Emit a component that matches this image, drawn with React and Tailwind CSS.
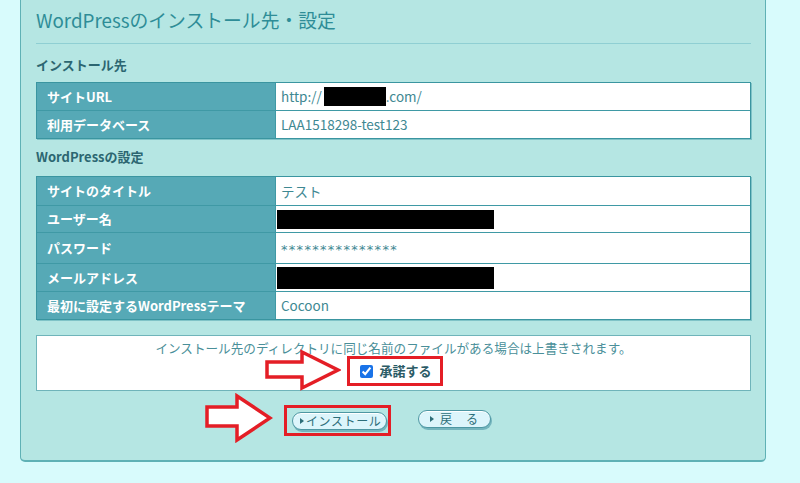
import React from "react";

const font = { fontFamily: '"Noto Sans CJK JP", "Noto Sans", sans-serif' };

function Row({ label, children, h, last }) {
  return (
    <div className={`flex ${last ? "" : "border-b border-[#3f99a5]"}`} style={{ height: h }}>
      <div className="w-[239px] shrink-0 bg-[#56a9b6] border-r border-[#3f99a5] pl-[10px] flex items-center text-[13px] font-bold text-white">
        {label}
      </div>
      <div className="flex-1 bg-white pl-[5px] flex items-center text-[13.5px] text-[#3e8892]">{children}</div>
    </div>
  );
}

function Table({ children }) {
  return (
    <div className="w-[715px] border border-[#3a95a0] shadow-[1px_1px_0_#7fc3c7]">{children}</div>
  );
}

function Redact({ w, h, ml = 0 }) {
  return <span className="inline-block bg-black" style={{ width: w, height: h, marginLeft: ml }} />;
}

function Tri() {
  return <span className="inline-block w-0 h-0 border-y-[3px] border-y-transparent border-l-[4px] border-l-[#2d6e79]" />;
}

export default function App() {
  return (
    <div className="min-h-[483px] bg-[#d8fbfc] pl-[20px]" style={font}>
      <div className="w-[746px] bg-[#b5e6e3] border-x border-b-2 border-[#5fb1b5] rounded-b-[5px] pl-[15px] pr-[14px] pb-[24px]">
        <div className="pt-[5px] pb-[8px] leading-[30px] text-[18.8px] text-[#2e8d97] border-b border-[#8fcfd3]">
          WordPressのインストール先・設定
        </div>
        <div className="pt-[12px] pb-[8px] leading-[18px] text-[13px] font-bold text-[#2c6671]">インストール先</div>
        <Table>
          <Row label="サイトURL" h={28}>
            <span>http://</span>
            <Redact w={62} h={19} ml={2} />
            <span>.com/</span>
          </Row>
          <Row label="利用データベース" h={27} last>
            LAA1518298-test123
          </Row>
        </Table>
        <div className="pt-[9px] pb-[10px] leading-[18px] text-[13px] font-bold text-[#2c6671]">WordPressの設定</div>
        <Table>
          <Row label="サイトのタイトル" h={29}>
            テスト
          </Row>
          <Row label="ユーザー名" h={27}>
            <Redact w={217} h={19} ml={-4} />
          </Row>
          <Row label="パスワード" h={31}>
            <span className="tracking-[1.3px] text-[13px] pt-[4px]" style={{ fontFamily: '"DejaVu Sans", sans-serif' }}>***************</span>
          </Row>
          <Row label="メールアドレス" h={28}>
            <Redact w={217} h={22} ml={-4} />
          </Row>
          <Row label="最初に設定するWordPressテーマ" h={27} last>
            Cocoon
          </Row>
        </Table>

        <div className="mt-[15px] w-[715px] bg-white border border-[#6fb4ba] pt-[3px] pb-[4px] flex flex-col items-center">
          <div className="leading-[18px] text-[12.6px] text-[#4a8f99]">
            インストール先のディレクトリに同じ名前のファイルがある場合は上書きされます。
          </div>
          <div className="relative mt-[-1px] w-[96px] h-[30px] border-[3px] border-[#e41e26] flex items-center pl-[10px] gap-[7px] translate-x-[1px]">
            <input type="checkbox" defaultChecked readOnly className="w-[13px] h-[13px] m-0 accent-[#1a73e8]" />
            <span className="text-[13px] font-bold text-[#2b5b66]">承諾する</span>
            <svg className="absolute left-[-86px] top-[-10px]" width="77" height="42" viewBox="0 0 77 42">
              <polygon points="3,13 38,13 38,3 74,21 38,39 38,28 3,28" fill="#fff" stroke="#e41e26" strokeWidth="3.5" />
            </svg>
          </div>
        </div>

        <div className="mt-[14px] pl-[248px] flex items-center">
          <div className="relative h-[31px] w-[107px] border-[3px] border-[#e41e26] pl-[5px] pt-[4px]">
            <div className="w-[95px] h-[18px] rounded-full border border-[#4d97a3] bg-[#dcf5fb] shadow-[1px_2px_0_#74b5bd,inset_0_1px_0_#fff] flex items-center pl-[7px] gap-[2px] text-[12px] leading-none tracking-[0.6px] text-[#2d6e79]">
              <Tri />
              <span>インストール</span>
            </div>
            <svg className="absolute left-[-83px] top-[-15px]" width="69" height="50" viewBox="0 0 69 50">
              <polygon points="3,14 33,14 33,3 66,25 33,47 33,33 3,33" fill="#fff" stroke="#e41e26" strokeWidth="3.5" />
            </svg>
          </div>
          <div className="ml-[27px] mt-[-3px] w-[73px] h-[18px] rounded-full border border-[#4d97a3] bg-[#dcf5fb] shadow-[1px_2px_0_#74b5bd,inset_0_1px_0_#fff] flex items-center pl-[11px] gap-[6px] text-[12px] leading-none tracking-[1px] text-[#2d6e79]">
            <Tri />
            <span>戻　る</span>
          </div>
        </div>
      </div>
    </div>
  );
}
